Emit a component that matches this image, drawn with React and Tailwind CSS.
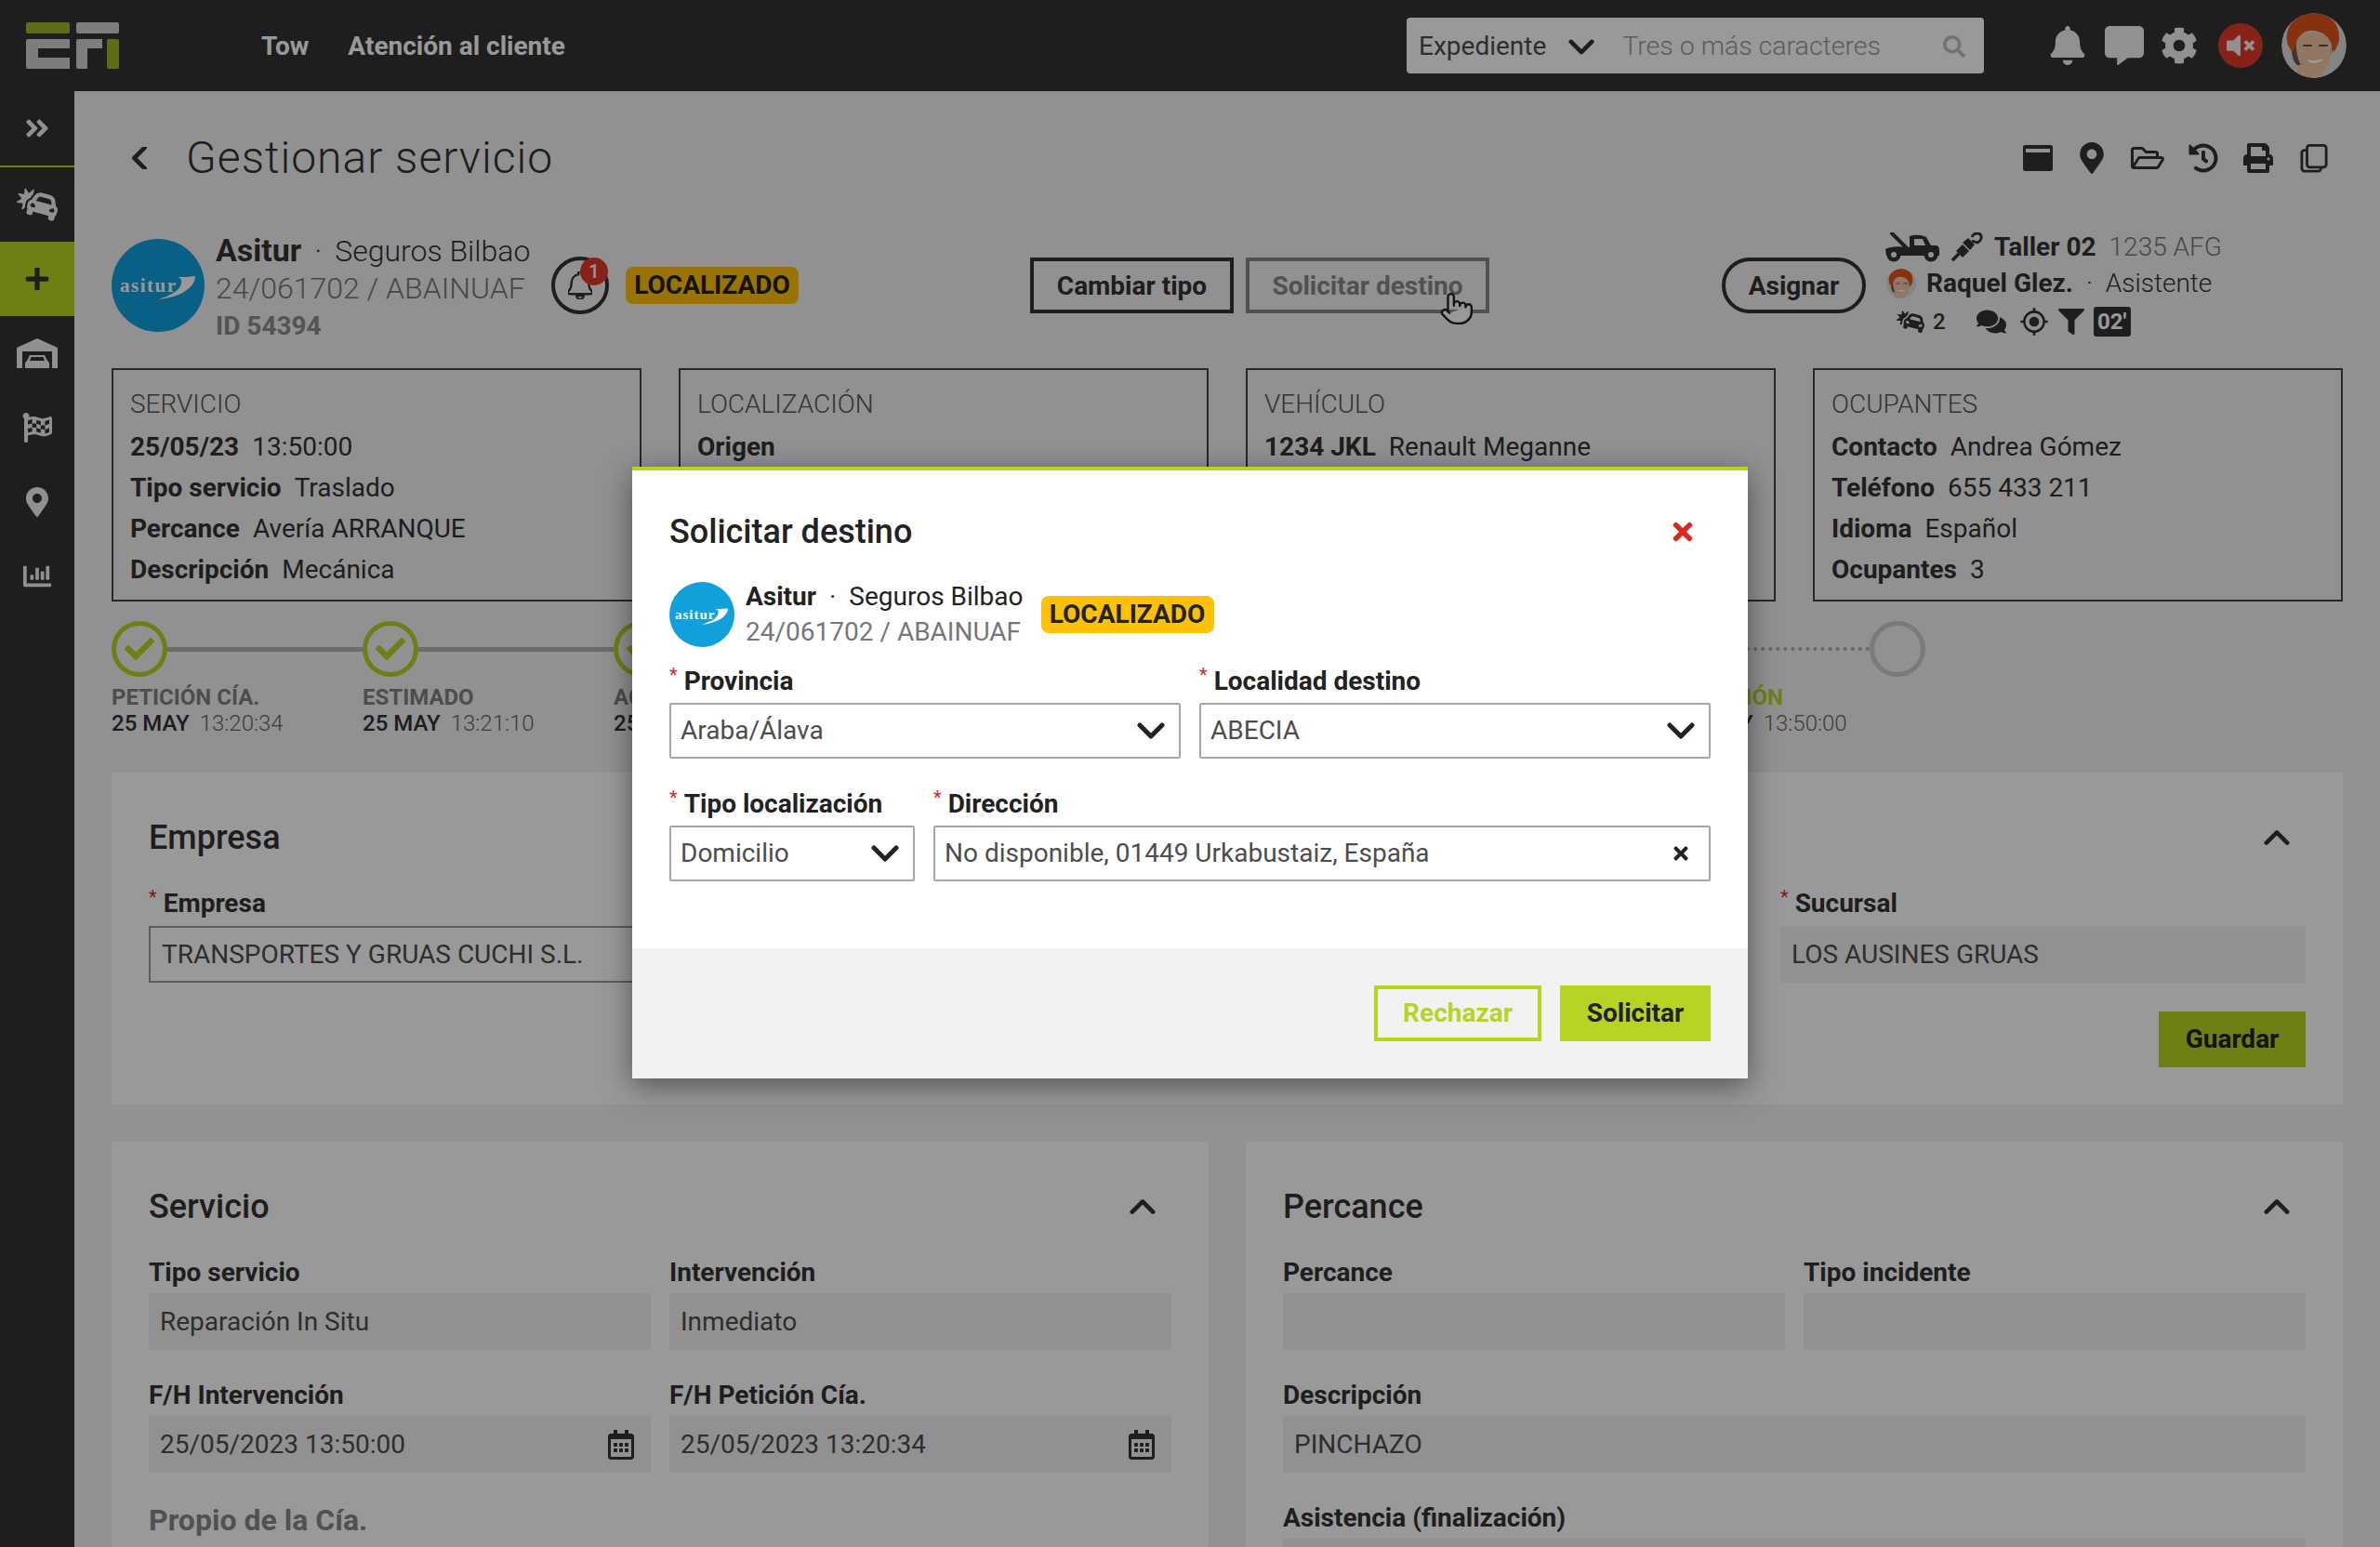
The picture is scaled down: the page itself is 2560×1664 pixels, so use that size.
import React from 'react';
import {
  FaAngleDoubleRight, FaCarCrash, FaPlus, FaFlagCheckered, FaMapMarkerAlt, FaChartBar, FaBell, FaCommentAlt,
  FaCog, FaVolumeMute, FaSearch, FaRegFolderOpen, FaHistory, FaPrint, FaComments, FaFilter, FaCheck, FaTimes,
  FaRegCalendarAlt,
} from 'react-icons/fa';
import { MdGpsFixed } from 'react-icons/md';
import { Pointer } from 'lucide-react';

const Chevron = ({ up, left, className }) => (
  <svg viewBox="0 0 30 18" className={className}>
    <path
      d="M3 3 L15 15 L27 3"
      fill="none"
      stroke="currentColor"
      strokeWidth="5"
      strokeLinecap="round"
      strokeLinejoin="round"
      transform={up ? 'rotate(180 15 9)' : left ? 'rotate(90 15 9)' : undefined}
    />
  </svg>
);

const AppLogo = () => (
  <svg viewBox="0 0 100 50" className="w-[100px] h-[50px]">
    <rect x="0" y="0" width="47" height="12" rx="2" fill="#9db52c" />
    <rect x="54" y="0" width="46" height="12" rx="2" fill="#d0d0d0" />
    <path d="M2 18 H47 V28 H13 V38 H47 V50 H2 a2 2 0 0 1-2-2 V20 a2 2 0 0 1 2-2z" fill="#d0d0d0" />
    <path d="M56 18 H82 V28 H66 V50 H56 a2 2 0 0 1-2-2 V20 a2 2 0 0 1 2-2z" fill="#d0d0d0" />
    <rect x="87" y="18" width="13" height="32" rx="2" fill="#9db52c" />
  </svg>
);

const Person = ({ className, id }) => (
  <svg viewBox="0 0 70 70" className={className}>
    <clipPath id={id}><circle cx="35" cy="35" r="35" /></clipPath>
    <g clipPath={`url(#${id})`}>
      <rect width="70" height="70" fill="#dcdcdc" />
      <path d="M11 30 C10 44 12 52 17 56 H26 V30z" fill="#6e5848" />
      <path d="M45 24 H57 C57 34 56 40 52 46 H45z" fill="#8c7260" />
      <path d="M16 30 C18 18 52 18 54 32 C55 48 46 70 36 70 C24 70 14 46 16 30z" fill="#efc6a6" />
      <path d="M17 70 V56 H26 L40 70z" fill="#efc6a6" />
      <path d="M28 51 Q36 56 44 50 Q36 53 28 51z" fill="#fff" stroke="#fff" strokeWidth="1.5" />
      <path d="M24 35 h8 M41 35 h8" stroke="#6e4a38" strokeWidth="2" strokeLinecap="round" />
      <path d="M6 30 C4 10 20 0 35 0 C50 0 64 10 62 30 C60 36 58 40 56 42 C54 24 42 19 32 19 C24 19 16 24 13 42 C10 40 7 36 6 30z" fill="#e0531a" />
    </g>
  </svg>
);

const AsiturLogo = ({ className, textClass, swooshClass }) => (
  <div className={`relative shrink-0 rounded-full bg-[#12a0dd] flex items-center ${className}`}>
    <span className={`font-['Liberation_Serif',serif] font-bold text-white leading-none ${textClass}`}>asitur</span>
    <svg viewBox="0 0 40 25" className={`absolute ${swooshClass}`}>
      <path d="M40 0 C40 12 24 23 0 25 C14 21 27 14 25 4 C24 2 22 1 20 1 C28 1 34 1 40 0z" fill="#fff" />
    </svg>
  </div>
);

const Hook = ({ className }) => (
  <svg viewBox="0 0 34 32" className={className}>
    <path d="M1 30 L8 23" stroke="currentColor" strokeWidth="3.5" />
    <path d="M5 20 L12 13 L19 20 L12 27z" fill="currentColor" />
    <path d="M12 11 L18 6 L25 13 L20 19z" fill="currentColor" />
    <path d="M22 9 L28 11 C34 8 33 1 28 1 C25 1 23 2 22 5" fill="none" stroke="currentColor" strokeWidth="2.8" />
  </svg>
);

const TowTruck = ({ className }) => (
  <svg viewBox="0 0 60 32" className={className}>
    <path d="M8 1 L24 17" stroke="currentColor" strokeWidth="4" strokeLinecap="round" />
    <path d="M1 18 Q8 14 27 16 V4 Q36 1 45 5 L50 14 H56 Q59 15 59 19 V25 H2z M32 7 V14 H44 L41 7z" fill="currentColor" fillRule="evenodd" />
    <circle cx="10" cy="24" r="7.500" fill="currentColor" />
    <circle cx="50" cy="24" r="7.500" fill="currentColor" />
    <circle cx="10" cy="24" r="3" fill="#f2f2f2" />
    <circle cx="50" cy="24" r="3" fill="#f2f2f2" />
  </svg>
);

const Garage = ({ className }) => (
  <svg viewBox="0 0 44 32" className={className}>
    <path d="M0 10 L22 0 L44 10 V32 H38 V14 H6 V32 H0z" fill="currentColor" />
    <path d="M14 18 H30 L33 24 Q35 25 35 27 V32 H9 V27 Q9 25 11 24z M15.500 20 L14 24 H30 L28.500 20z" fill="currentColor" fillRule="evenodd" />
  </svg>
);

const Panel = () => (
  <svg viewBox="0 0 32 28" className="w-[32px] h-[28px]">
    <rect width="32" height="28" rx="2" fill="currentColor" />
    <rect x="3" y="4" width="26" height="4" fill="#f2f2f2" />
  </svg>
);

const CopyIcon = () => (
  <svg viewBox="0 0 32 32" className="w-[30px] h-[32px]">
    <rect x="2" y="7" width="22" height="24" rx="3" fill="none" stroke="currentColor" strokeWidth="3" />
    <rect x="8" y="1.500" width="22" height="25" rx="3" fill="#f2f2f2" stroke="currentColor" strokeWidth="3" />
  </svg>
);

const SideItem = ({ children, active, border }) => (
  <div
    className={`flex items-center justify-center w-[80px] shrink-0 ${active ? 'bg-[#b7d425] text-[#333333]' : 'text-[#f0f0f0]'} ${border ? 'h-[82px] border-b-2 border-[#b7d425]' : 'h-[80px]'}`}
  >
    {children}
  </div>
);

const InfoCard = ({ title, lines }) => (
  <div className="border-2 border-[#444444] h-[251px] px-[18px] pt-[19px] text-[28px] leading-[44px] text-[#333333] overflow-hidden">
    <div className="font-light leading-[36px] mb-[6px] text-[#555555]">{title}</div>
    {lines.map(([label, value]) => (
      <div key={label} className="whitespace-nowrap">
        <span className="font-bold">{label}</span>
        {value ? <span className="ml-[14px]">{value}</span> : null}
      </div>
    ))}
  </div>
);

const Step = ({ label, date, time, className, line = true, labelClass = 'text-[#808080]', dotted }) => (
  <div className={`shrink-0 ${className}`}>
    <div className="flex items-center h-[60px]">
      <div className="w-[60px] h-[60px] shrink-0 rounded-full border-[5px] border-[#b7d425] flex items-center justify-center">
        <FaCheck className="text-[#b7d425] w-[32px] h-[32px]" />
      </div>
      {line ? <div className={`flex-1 ${dotted ? 'border-t-4 border-dotted border-[#aaaaaa]' : 'h-[5px] bg-[#b3b3b3]'}`} /> : null}
    </div>
    <div className={`mt-[8px] text-[24px] leading-[28px] font-bold whitespace-nowrap ${labelClass}`}>{label}</div>
    <div className="text-[24px] leading-[28px] whitespace-nowrap">
      <span className="font-medium text-[#333333]">{date}</span>
      <span className="ml-[11px] font-light text-[#666666]">{time}</span>
    </div>
  </div>
);

const Field = ({ label, value, required, icon, className, outlined }) => (
  <div className={className}>
    <div className="text-[28px] leading-[34px] font-bold text-[#333333] whitespace-nowrap">
      {required ? <span className="text-[#d62a1f] text-[20px] leading-none font-normal align-top mr-[7px]">*</span> : null}
      {label}
    </div>
    <div
      className={`mt-[5px] h-[61px] pl-[12px] pr-[18px] flex items-center justify-between text-[28px] text-[#4d4d4d] ${outlined ? 'bg-white border-2 border-[#999999]' : 'bg-[#f2f2f2]'}`}
    >
      <span className="whitespace-nowrap">{value}</span>
      {icon}
    </div>
  </div>
);

const SectionHead = ({ title }) => (
  <div className="flex items-center justify-between h-[48px] mb-[30px]">
    <div className="text-[36px] font-medium text-[#333333]">{title}</div>
    <Chevron up className="w-[28px] h-[18px] text-[#333333] mr-[17px]" />
  </div>
);

const ModalSelect = ({ label, value, className, clear }) => (
  <div className={className}>
    <div className="text-[28px] leading-[34px] font-bold text-[#222222] whitespace-nowrap">
      <span className="text-[#d62a1f] text-[20px] leading-none font-normal align-top mr-[7px]">*</span>
      {label}
    </div>
    <div className="mt-[6px] h-[60px] pl-[10px] pr-[15px] flex items-center justify-between bg-white border-2 border-[#a6a6a6] rounded-[2px] text-[28px] text-[#4d4d4d]">
      <span className="whitespace-nowrap">{value}</span>
      {clear ? (
        <FaTimes className="w-[22px] h-[22px] mr-[4px] text-[#222222]" />
      ) : (
        <Chevron className="w-[30px] h-[18px] text-[#222222]" />
      )}
    </div>
  </div>
);

export default function App() {
  return (
    <div className="relative w-[2560px] h-[1664px] overflow-hidden bg-[#f2f2f2] font-['Roboto',sans-serif] text-[#333333]">
      {/* top bar */}
      <header className="h-[98px] bg-[#333333] flex items-center pl-[28px] pr-[36px]">
        <AppLogo />
        <nav className="ml-[153px] mt-[2px] flex gap-[42px] text-[28px] font-bold text-white">
          <span>Tow</span>
          <span>Atención al cliente</span>
        </nav>
        <div className="ml-auto w-[621px] h-[60px] bg-white rounded-[4px] flex items-center pl-[13px] pr-[20px] pt-[2px] text-[28px]">
          <span className="text-[#4d4d4d]">Expediente</span>
          <Chevron className="w-[28px] h-[17px] ml-[24px] text-[#333333]" />
          <span className="ml-[30px] text-[28.5px] font-light text-[#999999]">Tres o más caracteres</span>
          <FaSearch className="ml-auto w-[24px] h-[24px] text-[#c0c0c0]" />
        </div>
        <div className="ml-[71px] flex items-center text-[#f2f2f2]">
          <FaBell className="w-[38px] h-[42px]" />
          <FaCommentAlt className="ml-[21px] w-[42px] h-[42px]" />
          <FaCog className="ml-[18px] w-[40px] h-[40px]" />
          <div className="ml-[22px] w-[48px] h-[48px] rounded-full bg-[#e03a2c] flex items-center justify-center">
            <FaVolumeMute className="w-[30px] h-[30px]" />
          </div>
          <Person id="avatar-main" className="ml-[20px] w-[70px] h-[70px] rounded-full" />
        </div>
      </header>

      <div className="flex h-[1566px]">
        {/* left rail */}
        <aside className="w-[80px] bg-[#333333] flex flex-col">
          <SideItem border><FaAngleDoubleRight className="w-[30px] h-[30px]" /></SideItem>
          <SideItem><FaCarCrash className="w-[44px] h-[38px]" /></SideItem>
          <SideItem active><FaPlus className="w-[28px] h-[28px]" /></SideItem>
          <SideItem><Garage className="w-[44px] h-[32px]" /></SideItem>
          <SideItem><FaFlagCheckered className="w-[36px] h-[32px]" /></SideItem>
          <SideItem><FaMapMarkerAlt className="w-[26px] h-[32px]" /></SideItem>
          <SideItem><FaChartBar className="w-[34px] h-[30px]" /></SideItem>
        </aside>

        <main className="flex-1 px-[40px] pt-[42px]">
          {/* title */}
          <div className="flex items-center h-[60px]">
            <Chevron left className="w-[28px] h-[24px] ml-[16px] text-[#333333]" />
            <h1 className="ml-[36px] text-[48px] font-light tracking-[1px] text-[#333333]">Gestionar servicio</h1>
            <div className="ml-auto mr-[16px] flex items-center gap-[29px] text-[#333333]">
              <Panel />
              <FaMapMarkerAlt className="w-[26px] h-[34px]" />
              <FaRegFolderOpen className="w-[36px] h-[32px]" />
              <FaHistory className="-ml-[3px] w-[32px] h-[32px]" />
              <FaPrint className="-ml-[2px] w-[32px] h-[32px]" />
              <CopyIcon />
            </div>
          </div>

          {/* service summary */}
          <div className="mt-[47px] flex items-center h-[120px]">
            <AsiturLogo
              className="w-[100px] h-[100px] pl-[9px]"
              textClass="text-[21px] tracking-[1.5px]"
              swooshClass="w-[40px] h-[25px] left-[50px] top-[40px]"
            />
            <div className="ml-[12px] w-[350px] pt-[4px]">
              <div className="leading-[40px] whitespace-nowrap flex items-baseline">
                <span className="text-[34px] font-bold">Asitur</span>
                <span className="mx-[14px] text-[32px] font-light">·</span>
                <span className="text-[32px] font-light">Seguros Bilbao</span>
              </div>
              <div className="text-[32px] leading-[40px] font-light text-[#777777] whitespace-nowrap">24/061702 / ABAINUAF</div>
              <div className="mt-[2px] text-[28px] leading-[38px] font-bold text-[#8c8c8c]">ID 54394</div>
            </div>
            <div className="relative w-[62px] h-[62px] ml-[11px] rounded-full border-4 border-[#333333] flex items-center justify-center">
              <FaBell className="w-[26px] h-[30px] text-transparent stroke-[#333333] stroke-[40]" />
              <span className="absolute -top-[3px] right-[-3px] w-[30px] h-[30px] rounded-full bg-[#e03a2c] text-white text-[20px] font-medium flex items-center justify-center">1</span>
            </div>
            <div className="ml-[18px] w-[186px] h-[40px] rounded-[8px] bg-[#ffc107] flex items-center justify-center text-[28px] leading-none font-bold text-[#222222]">LOCALIZADO</div>
            <button className="ml-[249px] w-[219px] h-[60px] pt-[2px] border-4 border-[#333333] text-[28px] font-bold">Cambiar tipo</button>
            <div className="relative ml-[13px]">
              <button className="w-[262px] h-[60px] pt-[2px] border-4 border-[#888888] text-[28px] font-bold text-[#888888]">Solicitar destino</button>
              <Pointer className="absolute right-[16px] -bottom-[14px] w-[38px] h-[38px] text-[#222222] fill-white" strokeWidth={1.5} />
            </div>
            <button className="ml-[250px] w-[155px] h-[60px] pt-[2px] rounded-full border-4 border-[#333333] text-[28px] font-bold">Asignar</button>
            <div className="ml-[20px] text-[28px]">
              <div className="flex items-center h-[37px]">
                <TowTruck className="w-[60px] h-[32px]" />
                <Hook className="ml-[12px] w-[34px] h-[32px]" />
                <span className="ml-[12px] font-bold">Taller 02</span>
                <span className="ml-[14px] font-light text-[#777777]">1235 AFG</span>
              </div>
              <div className="flex items-center h-[41px]">
                <Person id="avatar-small" className="w-[32px] h-[32px] rounded-full ml-[2px]" />
                <span className="ml-[11px] font-bold">Raquel Glez.</span>
                <span className="mx-[14px] font-light">·</span>
                <span className="font-light">Asistente</span>
              </div>
              <div className="flex items-center h-[42px] text-[24px] pl-[13px]">
                <FaCarCrash className="w-[30px] h-[26px]" />
                <span className="ml-[9px] font-medium">2</span>
                <FaComments className="ml-[33px] w-[32px] h-[30px]" />
                <MdGpsFixed className="ml-[14px] w-[32px] h-[32px]" />
                <FaFilter className="ml-[10px] w-[28px] h-[30px]" />
                <span className="ml-[10px] w-[40px] h-[32px] bg-[#333333] rounded-[3px] text-white font-bold flex items-center justify-center">02'</span>
              </div>
            </div>
          </div>

          {/* summary cards */}
          <div className="mt-[29px] grid grid-cols-4 gap-[40px]">
            <InfoCard
              title="SERVICIO"
              lines={[['25/05/23', '13:50:00'], ['Tipo servicio', 'Traslado'], ['Percance', 'Avería ARRANQUE'], ['Descripción', 'Mecánica']]}
            />
            <InfoCard title="LOCALIZACIÓN" lines={[['Origen', '']]} />
            <InfoCard title="VEHÍCULO" lines={[['1234 JKL', 'Renault Meganne']]} />
            <InfoCard
              title="OCUPANTES"
              lines={[['Contacto', 'Andrea Gómez'], ['Teléfono', '655 433 211'], ['Idioma', 'Español'], ['Ocupantes', '3']]}
            />
          </div>

          {/* progress */}
          <div className="mt-[21px] flex h-[163px]">
            <Step className="w-[270px]" label="PETICIÓN CÍA." date="25 MAY" time="13:20:34" />
            <Step className="w-[270px]" label="ESTIMADO" date="25 MAY" time="13:21:10" />
            <Step className="w-[1142px]" label="ACEPTADO" date="25 MAY" time="13:25:02" />
            <Step className="w-[209px]" label="SOLUCIÓN" labelClass="text-[#b7d425]" date="25 MAY" time="13:50:00" dotted />
            <div className="w-[60px] h-[60px] rounded-full border-[5px] border-[#cccccc]" />
          </div>

          {/* empresa */}
          <section className="bg-white h-[357px] px-[40px] pt-[46px]">
            <SectionHead title="Empresa" />
            <div className="grid grid-cols-4 gap-x-[20px]">
              <Field className="[&>div:last-child]:mt-[7px]" label="Empresa" value="TRANSPORTES Y GRUAS CUCHI S.L." required outlined />
              <Field className="col-start-4 [&>div:last-child]:mt-[7px]" label="Sucursal" value="LOS AUSINES GRUAS" required />
            </div>
            <div className="flex justify-end mt-[31px]">
              <button className="w-[158px] h-[60px] bg-[#b7d425] text-[28px] font-bold text-[#222222]">Guardar</button>
            </div>
          </section>

          <div className="mt-[40px] grid grid-cols-2 gap-[40px]">
            <section className="bg-white h-[500px] px-[40px] pt-[46px]">
              <SectionHead title="Servicio" />
              <div className="grid grid-cols-2 gap-x-[20px] gap-y-[32px]">
                <Field label="Tipo servicio" value="Reparación In Situ" />
                <Field label="Intervención" value="Inmediato" />
                <Field label="F/H Intervención" value="25/05/2023 13:50:00" icon={<FaRegCalendarAlt className="w-[28px] h-[32px] text-[#333333]" />} />
                <Field label="F/H Petición Cía." value="25/05/2023 13:20:34" icon={<FaRegCalendarAlt className="w-[28px] h-[32px] text-[#333333]" />} />
              </div>
              <div className="mt-[27px] text-[32px] font-bold text-[#888888]">Propio de la Cía.</div>
            </section>
            <section className="bg-white h-[500px] px-[40px] pt-[46px]">
              <SectionHead title="Percance" />
              <div className="grid grid-cols-2 gap-x-[20px] gap-y-[32px]">
                <Field label="Percance" value="" />
                <Field label="Tipo incidente" value="" />
                <Field className="col-span-2" label="Descripción" value="PINCHAZO" />
                <Field className="col-span-2" label="Asistencia (finalización)" value="" />
              </div>
            </section>
          </div>
        </main>
      </div>

      {/* dim layer */}
      <div className="absolute inset-0 bg-black/40" />

      {/* dialog */}
      <div className="absolute left-[680px] top-[502px] w-[1200px] bg-white border-t-4 border-[#b7d425] shadow-[0_8px_30px_rgba(0,0,0,0.45)]">
        <div className="h-[514px] px-[40px] pt-[42px]">
          <div className="flex items-center justify-between h-[48px]">
            <h2 className="text-[36px] font-medium text-[#222222]">Solicitar destino</h2>
            <FaTimes className="w-[26px] h-[30px] mr-[17px] text-[#d62a1f]" />
          </div>
          <div className="mt-[30px] flex items-center h-[70px]">
            <AsiturLogo
              className="w-[70px] h-[70px] pl-[6px]"
              textClass="text-[15px] tracking-[1px]"
              swooshClass="w-[28px] h-[18px] left-[35px] top-[28px]"
            />
            <div className="ml-[12px]">
              <div className="text-[28px] leading-[38px] whitespace-nowrap">
                <span className="font-bold text-[#222222]">Asitur</span>
                <span className="mx-[14px]">·</span>
                <span className="text-[#222222]">Seguros Bilbao</span>
              </div>
              <div className="text-[28px] leading-[38px] text-[#777777] whitespace-nowrap">24/061702 / ABAINUAF</div>
            </div>
            <div className="ml-[19px] w-[186px] h-[40px] rounded-[8px] bg-[#ffc107] flex items-center justify-center text-[28px] leading-none font-bold text-[#222222]">LOCALIZADO</div>
          </div>
          <div className="mt-[20px] grid grid-cols-2 gap-x-[20px]">
            <ModalSelect label="Provincia" value="Araba/Álava" />
            <ModalSelect label="Localidad destino" value="ABECIA" />
          </div>
          <div className="mt-[32px] flex gap-[20px]">
            <ModalSelect className="w-[264px] shrink-0" label="Tipo localización" value="Domicilio" />
            <ModalSelect className="flex-1" label="Dirección" value="No disponible, 01449 Urkabustaiz, España" clear />
          </div>
        </div>
        <div className="h-[140px] bg-[#f2f2f2] pr-[40px] flex items-center justify-end gap-[20px]">
          <button className="w-[180px] h-[60px] border-4 border-[#b7d425] text-[28px] font-bold text-[#b7d425]">Rechazar</button>
          <button className="w-[162px] h-[60px] bg-[#b7d425] text-[28px] font-bold text-[#222222]">Solicitar</button>
        </div>
      </div>
    </div>
  );
}
